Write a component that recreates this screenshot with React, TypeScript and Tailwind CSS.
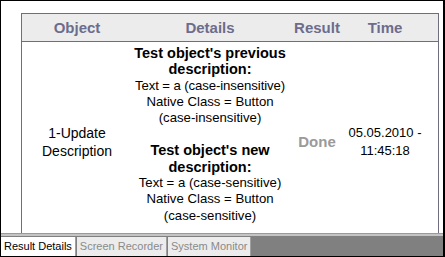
export default function App() {
  const regular = "Text = a (case-insensitive)";
  return (
    <div
      className="w-[445px] h-[257px] bg-white border-l border-t border-b border-r-2 border-black flex flex-col overflow-hidden"
      style={{ fontFamily: '"Liberation Sans", Arial, sans-serif' }}
    >
      {/* Report area */}
      <div className="flex-1 min-h-0 overflow-hidden pl-[20px] pt-[12px] pr-[4px]">
        <div className="border border-[#6e6e80] h-[260px]">
          {/* Header */}
          <div className="grid grid-cols-[110px_156px_58px_78px] h-[28px] bg-[#ececec] border-b border-[#6e6e80] items-center text-[15px] font-bold text-[#6c6c8c] pt-[2px]">
            <div className="text-center">Object</div>
            <div className="text-center">Details</div>
            <div className="text-center">Result</div>
            <div className="text-center">Time</div>
          </div>
          {/* Row */}
          <div className="grid grid-cols-[110px_156px_58px_78px] h-[194px] text-black">
            <div className="flex items-center justify-center text-center text-[14px] leading-[18px] pt-[6px]">
              1-Update<br />Description
            </div>
            <div className="flex flex-col items-center text-center pt-[3px] leading-[16.3px]">
              <div className="text-[14.5px] font-bold">Test object's previous</div>
              <div className="text-[14.5px] font-bold">description:</div>
              <div className="text-[13.2px] tracking-[-0.1px]">{regular}</div>
              <div className="text-[13.2px]">Native Class = Button</div>
              <div className="text-[13.2px]">(case-insensitive)</div>
              <div className="h-[16px]" />
              <div className="text-[14.5px] font-bold">Test object's new</div>
              <div className="text-[14.5px] font-bold">description:</div>
              <div className="text-[13.2px]">Text = a (case-sensitive)</div>
              <div className="text-[13.2px]">Native Class = Button</div>
              <div className="text-[13.2px]">(case-sensitive)</div>
            </div>
            <div className="flex items-center justify-center text-[15px] font-bold text-[#9a9a9a] pt-[6px]">
              Done
            </div>
            <div className="flex items-center justify-center text-center text-[13px] leading-[18px] pt-[6px] whitespace-nowrap">
              05.05.2010 -<br />11:45:18
            </div>
          </div>
        </div>
      </div>

      {/* Tabs strip */}
      <div className="h-[1px] bg-[#9a9a9a]" />
      <div className="h-[2px] bg-[#c4c4c4]" />
      <div className="h-[20px] bg-[#808080] flex items-stretch pt-[1px] text-[11px] leading-none">
        <div className="bg-white text-black px-[3px] flex items-center border-r border-[#a0a0a0]">Result Details</div>
        <div className="ml-[1px] bg-[#ececec] text-[#8a8a8a] px-[3px] flex items-center border-r border-[#a0a0a0]">Screen Recorder</div>
        <div className="ml-[1px] bg-[#ececec] text-[#8a8a8a] px-[3px] flex items-center border-r border-[#a0a0a0]">System Monitor</div>
      </div>
    </div>
  );
}
